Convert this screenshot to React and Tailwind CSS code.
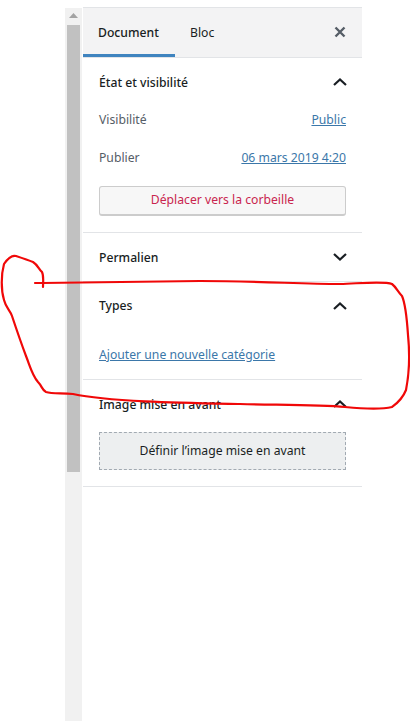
const Chevron = ({ up }) => (
    <svg width="16" height="10" viewBox="0 0 16 10" fill="none" stroke="#191e23" strokeWidth="2.2" className="mr-[-2px]">
        <path d={up ? "M2 8 L8 2.5 L14 8" : "M2 2 L8 7.5 L14 2"} />
    </svg>
);

const SectionHeader = ({ title, up }) => (
    <div className="flex items-center justify-between h-12 px-4 font-medium text-[#191e23]">
        <span className={title === "Types" ? "" : "mt-[2px]"}>{title}</span>
        <Chevron up={up} />
    </div>
);

export default function App() {
    return (
        <div className="relative h-[721px] w-[410px] overflow-hidden bg-white flex text-[12.2px] [font-family:'Noto_Sans',sans-serif]">
            <div className="w-[65px] shrink-0" />
            <div className="w-[17px] shrink-0 bg-[#f1f1f1] flex flex-col items-center mt-[8px] pt-[4px]">
                <svg width="9" height="5" viewBox="0 0 9 5" className="mt-[1px]">
                    <path d="M0 5 L4.5 0 L9 5 Z" fill="#a3a3a3" />
                </svg>
                <div className="w-[13px] h-[447px] mt-[7px] bg-[#c1c1c1]" />
            </div>
            <div className="w-[279px] shrink-0 ml-px border-t border-[#e2e4e7] mt-[7px]">
                <div className="flex items-center justify-between h-[50px] bg-[#f3f3f4] border-b border-[#e2e4e7] pr-4 relative">
                    <div className="flex h-full">
                        <div className="w-[92px] h-[49px] pl-[15px] pt-[16px] font-medium text-[#191e23] border-b-[3px] border-[#3f84bf] leading-[18px]">Document</div>
                        <div className="pl-[15px] pt-[16px] text-[#191e23] leading-[18px]">Bloc</div>
                    </div>
                    <svg width="12" height="12" viewBox="0 0 12 12" stroke="#555d66" strokeWidth="2.4" className="mb-[1px]">
                        <path d="M1.5 1.5 L10.5 10.5 M10.5 1.5 L1.5 10.5" />
                    </svg>
                </div>
                <div className="border-b border-[#e2e4e7] pb-4">
                    <SectionHeader title="État et visibilité" up />
                    <div className="px-4">
                        <div className="flex justify-between h-[38px] items-center -mt-[5px] text-[#555d66]">
                            <span>Visibilité</span>
                            <a className="underline text-[#3b77a9]">Public</a>
                        </div>
                        <div className="flex justify-between h-[38px] items-center text-[#555d66]">
                            <span>Publier</span>
                            <a className="underline text-[#3b77a9]">06 mars 2019 4:20</a>
                        </div>
                        <button className="w-full h-[30px] mt-[9px] bg-[#f7f7f7] border border-[#cccccc] border-b-2 rounded-[3px] text-[#c9254e] text-center">Déplacer vers la corbeille</button>
                    </div>
                </div>
                <div className="border-b border-[#e2e4e7]">
                    <SectionHeader title="Permalien" />
                </div>
                <div className="border-b border-[#e2e4e7] h-[98px]">
                    <SectionHeader title="Types" up />
                    <div className="px-4 pt-4">
                        <a className="underline text-[#3b77a9]">Ajouter une nouvelle catégorie</a>
                    </div>
                </div>
                <div className="border-b border-[#e2e4e7] pb-4">
                    <SectionHeader title="Image mise en avant" up />
                    <div className="px-4 pt-1">
                        <button className="w-full h-[38px] bg-[#edeff0] border border-dashed border-[#a2aab2] text-[#191e23] text-center">Définir l’image mise en avant</button>
                    </div>
                </div>
            </div>
            {/* main a la souris par dessus la capture */}
            <svg width="410" height="721" viewBox="0 0 410 721" fill="none" className="absolute inset-0 pointer-events-none">
                <path
                    d="M35 283 C70 283 100 282 200 281 C260 281 300 284 340 284 C365 283 385 281 392 284 C396 287 398 292 402 296 C406 305 407 320 408 335 C410 355 409 375 406 390 C402 400 396 404 392 407 C380 410 365 409 345 407 C320 405 280 405 240 404 C190 403 110 402 73 394 C60 393 52 394 46 392 C42 390 42 386 38 382 C32 375 30 366 26 356 C20 340 15 325 12 316 C10 310 6 308 4 300 C1 290 1 275 4 264 C8 258 12 255 16 256 C22 258 28 260 33 262 C38 265 39 270 42 272 C44 276 43 282 43 287"
                    stroke="#f00808"
                    strokeWidth="2.2"
                    strokeLinecap="round"
                    strokeLinejoin="round"
                />
            </svg>
        </div>
    );
}
